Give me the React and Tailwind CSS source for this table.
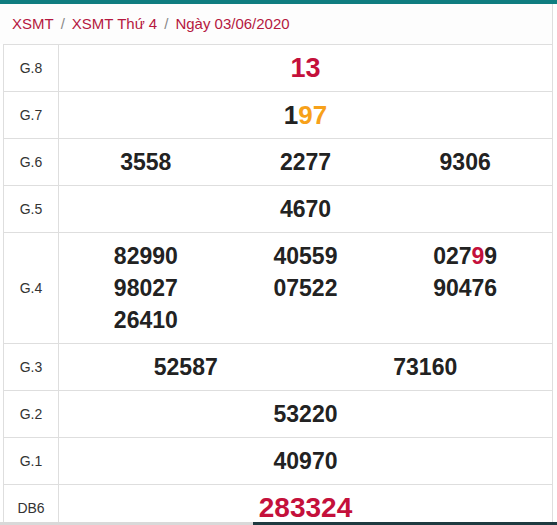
import React from "react";

const Num = ({ children, className = "" }) => (
  <span className={`font-bold text-[#222] ${className}`}>{children}</span>
);

function Row({ label, children, tall = false }) {
  return (
    <div className="flex border-b border-[#dedede]">
      <div className="w-[55px] shrink-0 flex items-center justify-center border-r border-[#dedede] text-[14px] text-[#333]">
        {label}
      </div>
      <div className={`flex-1 px-[7px] ${tall ? "py-[7px]" : "h-[46px] flex items-center"}`}>
        {children}
      </div>
    </div>
  );
}

function Cols({ items, n }) {
  const w = n === 3 ? "w-1/3" : n === 2 ? "w-1/2" : "w-full";
  return (
    <div className="flex flex-wrap w-full">
      {items.map((it, i) => (
        <div key={i} className={`${w} text-center text-[23px] leading-[32px] h-[32px]`}>
          {it}
        </div>
      ))}
    </div>
  );
}

export default function App() {
  return (
    <div
      className="relative w-[557px] h-[525px] overflow-hidden bg-white"
      style={{ fontFamily: '"Liberation Sans", Arial, sans-serif' }}
    >
      <div className="h-[4px] bg-[#0f7d80]" />
      <div className="w-[553px] border-r border-[#dedede]">
        <div className="h-[40px] pl-[12px] flex items-center bg-[#fdfdfd] text-[15px]">
          <span className="text-[#b5183f]">XSMT</span>
          <span className="text-[#8a8a8a] mx-[7px]">/</span>
          <span className="text-[#b5183f]">XSMT Thứ 4</span>
          <span className="text-[#8a8a8a] mx-[7px]">/</span>
          <span className="text-[#b5183f]">Ngày 03/06/2020</span>
        </div>
        <div className="ml-[3px] border-l border-t border-[#dedede]">
          <Row label="G.8">
            <Cols
              n={1}
              items={[<Num className="text-[#c4103b] text-[27px]">13</Num>]}
            />
          </Row>
          <Row label="G.7">
            <Cols
              n={1}
              items={[
                <span className="font-bold text-[26px]">
                  <span className="text-[#222]">1</span>
                  <span className="text-[#f7a11a]">97</span>
                </span>,
              ]}
            />
          </Row>
          <Row label="G.6">
            <Cols
              n={3}
              items={[<Num>3558</Num>, <Num>2277</Num>, <Num>9306</Num>]}
            />
          </Row>
          <Row label="G.5">
            <Cols n={1} items={[<Num>4670</Num>]} />
          </Row>
          <Row label="G.4" tall>
            <Cols
              n={3}
              items={[
                <Num>82990</Num>,
                <Num>40559</Num>,
                <span className="font-bold text-[#222]">
                  027<span className="text-[#c4103b]">9</span>9
                </span>,
                <Num>98027</Num>,
                <Num>07522</Num>,
                <Num>90476</Num>,
                <Num>26410</Num>,
              ]}
            />
          </Row>
          <Row label="G.3">
            <Cols n={2} items={[<Num>52587</Num>, <Num>73160</Num>]} />
          </Row>
          <Row label="G.2">
            <Cols n={1} items={[<Num>53220</Num>]} />
          </Row>
          <Row label="G.1">
            <Cols n={1} items={[<Num>40970</Num>]} />
          </Row>
          <Row label="DB6">
            <Cols
              n={1}
              items={[<Num className="text-[#c4103b] text-[28px]">283324</Num>]}
            />
          </Row>
        </div>
      </div>
      <div className="absolute left-0 right-0 bottom-0 h-[3px] flex">
        <div className="w-[253px] bg-[#d9d9d9]" />
        <div className="flex-1 bg-[#1f3a40]" />
      </div>
    </div>
  );
}
